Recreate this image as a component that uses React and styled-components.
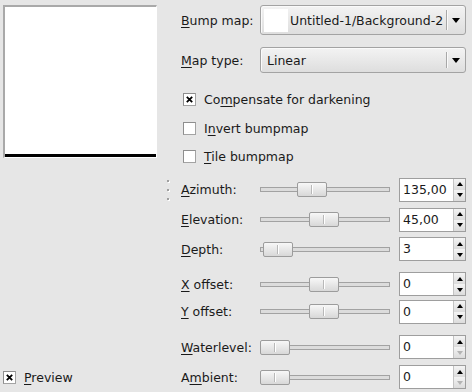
import React from "react";
import styled, { createGlobalStyle } from "styled-components";

const GlobalStyle = createGlobalStyle`
  html, body {
    margin: 0;
    padding: 0;
    background: #e6e6e6;
  }
  body {
    font-family: "DejaVu Sans", "Liberation Sans", sans-serif;
    font-size: 12.5px;
    color: #1a1a1a;
  }
`;

const Dialog = styled.div`
  display: flex;
  width: 472px;
  height: 392px;
  overflow: hidden;
  background: #e6e6e6;
`;

const LeftCol = styled.div`
  width: 164px;
  flex: none;
  padding-left: 3px;
  box-sizing: border-box;
  display: flex;
  flex-direction: column;
  justify-content: space-between;
`;

const PreviewFrame = styled.div`
  margin-top: 5px;
  width: 154px;
  height: 153px;
  box-sizing: border-box;
  border-top: 2px solid #a9a9a9;
  border-left: 2px solid #a9a9a9;
  border-right: 1px solid #ffffff;
  border-bottom: 1px solid #ffffff;
  background: #ffffff;
  display: flex;
  flex-direction: column;
  justify-content: flex-end;
`;

const PreviewProgress = styled.div`
  height: 3px;
  background: #000;
`;

const RightCol = styled.div`
  width: 308px;
  flex: none;
  display: flex;
  flex-direction: column;
`;

const ComboRow = styled.div`
  display: grid;
  grid-template-columns: 17px 79px 206px;
  align-items: center;
  height: ${(p) => p.$h}px;
  margin-top: ${(p) => p.$mt}px;
`;

const Label = styled.span`
  grid-column: 2;
  white-space: nowrap;
`;

const Mn = styled.u`
  text-decoration: underline;
  text-underline-offset: 2px;
`;

const Combo = styled.div`
  grid-column: 3;
  height: ${(p) => p.$h}px;
  box-sizing: border-box;
  border: 1px solid #a3a3a3;
  border-radius: 3px;
  background: linear-gradient(#f3f3f3, #dedede);
  box-shadow: inset 1px 1px 0 #fafafa;
  display: flex;
  align-items: center;
  padding-left: 3px;
`;

const Swatch = styled.div`
  width: 24px;
  height: 23px;
  background: #fff;
  margin-right: 2px;
`;

const ComboText = styled.span`
  flex: 1;
  padding-left: ${(p) => p.$pl || 0}px;
  white-space: nowrap;
`;

const ComboSep = styled.div`
  width: 1px;
  align-self: stretch;
  margin: 4px 0;
  background: #a8a8a8;
  box-shadow: 1px 0 0 #fafafa;
`;

const ComboArrow = styled.div`
  width: 18px;
  display: flex;
  justify-content: center;
  &::after {
    content: "";
    border-left: 4px solid transparent;
    border-right: 4px solid transparent;
    border-top: 5px solid #000;
  }
`;

const CheckRow = styled.div`
  display: flex;
  align-items: center;
  gap: 8px;
  height: ${(p) => p.$h || 29}px;
  padding-left: ${(p) => p.$pl || 0}px;
  margin-top: ${(p) => p.$mt || 0}px;
`;

const CheckBox = styled.div`
  width: 13px;
  height: 13px;
  flex: none;
  box-sizing: border-box;
  border: 1px solid #a3a3a3;
  border-top-color: #8e8e8e;
  border-left-color: #8e8e8e;
  background: #fff;
  display: flex;
  align-items: center;
  justify-content: center;
`;

const SliderRow = styled.div`
  display: grid;
  grid-template-columns: 17px 79px 130px 9px 67px;
  align-items: center;
  height: ${(p) => p.$h || 30}px;
  margin-top: ${(p) => p.$mt || 0}px;
`;

const Dots = styled.div`
  grid-column: 1;
  display: flex;
  flex-direction: column;
  gap: 7px;
  padding-left: 3px;
  & > i {
    display: block;
    width: 2px;
    height: 2px;
    background: #a0a0a0;
    box-shadow: 1px 1px 0 #fff;
  }
`;

const Trough = styled.div`
  grid-column: 3;
  position: relative;
  height: 15px;
  &::before {
    content: "";
    position: absolute;
    left: 0;
    right: 0;
    top: 5px;
    height: 5px;
    box-sizing: border-box;
    border: 1px solid #a2a2a2;
    background: #dcdcdc;
  }
`;

const Handle = styled.div`
  position: absolute;
  top: 0;
  width: 30px;
  height: 15px;
  box-sizing: border-box;
  border: 1px solid #9c9c9c;
  border-radius: 2px;
  background: linear-gradient(#f7f7f7, #d8d8d8);
  &::after {
    content: "";
    position: absolute;
    left: 14px;
    top: 2px;
    width: 1px;
    height: 9px;
    background: #fff;
    box-shadow: -1px 0 0 #b8b8b8;
  }
`;

const Spin = styled.div`
  grid-column: 5;
  width: 67px;
  height: 24px;
  box-sizing: border-box;
  border: 1px solid #9e9e9e;
  background: #fff;
  display: flex;
  overflow: hidden;
`;

const SpinText = styled.span`
  flex: 1;
  min-width: 0;
  padding-left: 3px;
  line-height: 22px;
  white-space: nowrap;
`;

const SpinButtons = styled.div`
  width: 11px;
  flex: none;
  display: flex;
  flex-direction: column;
  border-left: 1px solid #c4c4c4;
`;

const SpinBtn = styled.div`
  flex: 1;
  display: flex;
  align-items: center;
  justify-content: center;
  background: linear-gradient(#f4f4f4, #dcdcdc);
  &::after {
    content: "";
    border-left: 3px solid transparent;
    border-right: 3px solid transparent;
    ${(p) =>
      p.$down
        ? `border-top: 4px solid ${p.$disabled ? "#b4b4b4" : "#000"};`
        : `border-bottom: 4px solid ${p.$disabled ? "#b4b4b4" : "#000"};`}
  }
`;

function Check({ checked }) {
  return (
    <CheckBox>
      {checked && (
        <svg width="7" height="7" viewBox="0 0 7 7">
          <path d="M0.8 0.8 L6.2 6.2 M6.2 0.8 L0.8 6.2" stroke="#000" strokeWidth="1.8" />
        </svg>
      )}
    </CheckBox>
  );
}

function Slider({ label, pos, value, mt, h, downOff, dots }) {
  return (
    <SliderRow $mt={mt} $h={h}>
      {dots && (
        <Dots>
          <i />
          <i />
          <i />
        </Dots>
      )}
      <Label>{label}</Label>
      <Trough>
        <Handle style={{ left: pos }} />
      </Trough>
      <Spin>
        <SpinText>{value}</SpinText>
        <SpinButtons>
          <SpinBtn />
          <SpinBtn $down $disabled={downOff} />
        </SpinButtons>
      </Spin>
    </SliderRow>
  );
}

export default function App() {
  return (
    <>
      <GlobalStyle />
      <Dialog>
        <LeftCol>
          <PreviewFrame>
            <PreviewProgress />
          </PreviewFrame>
          <CheckRow $h={29}>
            <Check checked />
            <span>
              <Mn>P</Mn>review
            </span>
          </CheckRow>
        </LeftCol>
        <RightCol>
          <ComboRow $h={30} $mt={5}>
            <Label>
              <Mn>B</Mn>ump map:
            </Label>
            <Combo $h={30}>
              <Swatch />
              <ComboText>Untitled-1/Background-2</ComboText>
              <ComboSep />
              <ComboArrow />
            </Combo>
          </ComboRow>
          <ComboRow $h={26} $mt={12}>
            <Label>
              <Mn>M</Mn>ap type:
            </Label>
            <Combo $h={26}>
              <ComboText $pl={3}>Linear</ComboText>
              <ComboSep />
              <ComboArrow />
            </Combo>
          </ComboRow>
          <CheckRow $pl={19} $mt={12}>
            <Check checked />
            <span>
              Co<Mn>m</Mn>pensate for darkening
            </span>
          </CheckRow>
          <CheckRow $pl={19}>
            <Check />
            <span>
              I<Mn>n</Mn>vert bumpmap
            </span>
          </CheckRow>
          <CheckRow $pl={19}>
            <Check />
            <span>
              <Mn>T</Mn>ile bumpmap
            </span>
          </CheckRow>
          <Slider
            dots
            mt={4}
            label={<><Mn>A</Mn>zimuth:</>}
            pos={37}
            value="135,00"
          />
          <Slider label={<><Mn>E</Mn>levation:</>} pos={49} value="45,00" />
          <Slider label={<><Mn>D</Mn>epth:</>} pos={3} value="3" />
          <Slider
            mt={6}
            h={28}
            label={<><Mn>X</Mn> offset:</>}
            pos={49}
            value="0"
          />
          <Slider h={28} label={<><Mn>Y</Mn> offset:</>} pos={49} value="0" />
          <Slider
            mt={7}
            label={<><Mn>W</Mn>aterlevel:</>}
            pos={0}
            value="0"
            downOff
          />
          <Slider
            label={<>A<Mn>m</Mn>bient:</>}
            pos={0}
            value="0"
            downOff
          />
        </RightCol>
      </Dialog>
    </>
  );
}
